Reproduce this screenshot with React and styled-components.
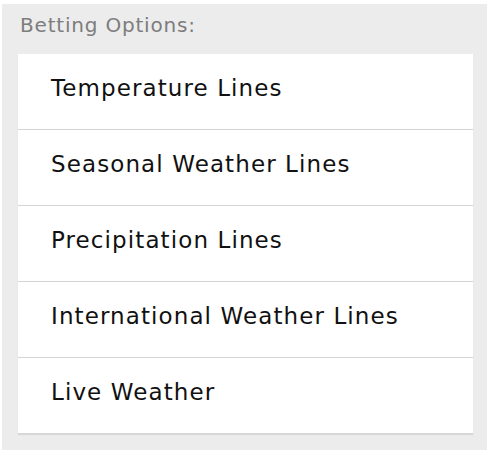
import React from "react";
import styled, { createGlobalStyle } from "styled-components";

const GlobalStyle = createGlobalStyle`
    html, body {
        margin: 0;
        padding: 0;
        background: #ffffff;
    }
    body {
        font-family: "DejaVu Sans", "Noto Sans", sans-serif;
    }
`;

const Panel = styled.div`
    margin: 4px 6px 0 2px;
    padding: 0 14px 16px 16px;
    background: #ececec;
    min-height: 446px;
    box-sizing: border-box;
`;

const Heading = styled.div`
    height: 50px;
    padding: 9px 0 0 2px;
    box-sizing: border-box;
    font-size: 20px;
    letter-spacing: 0.8px;
    color: #7d7d7d;
`;

const List = styled.ul`
    list-style: none;
    margin: 0;
    padding: 0;
    background: #ffffff;
    box-shadow: 0 1px 1px rgba(0, 0, 0, 0.08);
`;

const Option = styled.li`
    height: 76px;
    padding: 21px 0 0 33px;
    box-sizing: border-box;
    border-bottom: 1px solid #d4d4d4;
    font-size: 23px;
    letter-spacing: 1.1px;
    color: #111111;
    cursor: pointer;
`;

const options = [
    "Temperature Lines",
    "Seasonal Weather Lines",
    "Precipitation Lines",
    "International Weather Lines",
    "Live Weather",
];

const App = () => {
    return (
        <>
            <GlobalStyle />
            <Panel>
                <Heading>Betting Options:</Heading>
                <List>
                    {options.map((label) => (
                        <Option key={label}>{label}</Option>
                    ))}
                </List>
            </Panel>
        </>
    );
};

export default App;
